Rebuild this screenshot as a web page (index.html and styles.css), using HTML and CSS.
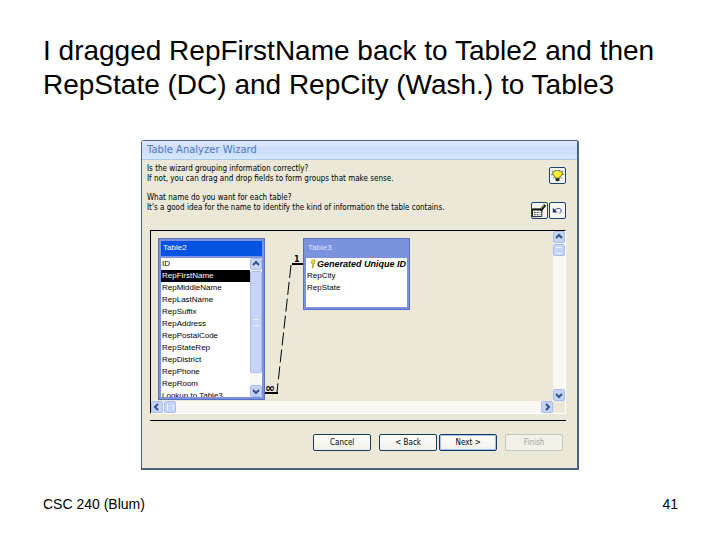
FILE: index.html
```html
<!DOCTYPE html>
<html lang="en">
<head>
    <meta charset="UTF-8">
    <meta name="viewport" content="width=device-width, initial-scale=1.0">
    <title>CSC 240 - Table Analyzer Wizard</title>
    <link rel="stylesheet" href="styles.css">
</head>
<body>
    <main class="slide">
        <h1>I dragged RepFirstName back to Table2 and then RepState (DC) and RepCity (Wash.) to Table3</h1>

        <section class="wizard">
            <h2 class="wizard-title">Table Analyzer Wizard</h2>
            <div class="wizard-body">
                <div class="intro">
                    <div class="questions">
                        <p>Is the wizard grouping information correctly?<br>If not, you can drag and drop fields to form groups that make sense.</p>
                        <p>What name do you want for each table?<br>It's a good idea for the name to identify the kind of information the table contains.</p>
                    </div>
                    <div class="tools">
                        <button class="tool" aria-label="Tips">
                            <svg viewBox="0 0 16 16"><path d="M2 3l2 1M1 7h2M14 3l-2 1M15 7h-2M3 11l2-1M13 11l-2-1" stroke="#777733"/><path d="M5 3h6l2 2v2l-3 3v1H6v-1L3 7V5z" fill="#f8ef20" stroke="#55551a"/><path d="M6 11h4v3H6z" fill="#222"/><path d="M6 4h3" stroke="#fff"/></svg>
                        </button>
                        <div class="tool-row">
                            <button class="tool" aria-label="Rename table">
                                <svg viewBox="0 0 16 16"><path d="M.5 6.500h10v8H.5z" fill="#fff" stroke="#111"/><path d="M0 7h10" stroke="#111" stroke-width="2"/><path d="M2 10h7M2 12.500h7" stroke="#222" stroke-dasharray="2 1"/><path d="M9 8l5-6" stroke="#111" stroke-width="3"/><path d="M10 6l3-4" stroke="#ddd35a"/></svg>
                            </button>
                            <button class="tool" aria-label="Undo">
                                <svg viewBox="0 0 16 16"><path d="M5 8c2-3 7-3 7 0 0 1-1 2-2 3" fill="none" stroke="#1b2a78"/><path d="M3 5v5h5z" fill="#1b2a78"/></svg>
                            </button>
                        </div>
                    </div>
                </div>

                <div class="diagram">
                    <div class="canvas">
                        <svg class="link" viewBox="0 0 44 142">
                            <path d="M29 9h11M2 138h13" stroke="#000" stroke-width="2"/>
                            <path d="M28 10L14 137" stroke="#000" stroke-dasharray="13 4"/>
                            <text x="31" y="7">1</text>
                            <text x="2" y="137">∞</text>
                        </svg>
                        <div class="node node-table2">
                            <h3>Table2</h3>
                            <div class="node-list">
                                <ul>
                                    <li>ID</li>
                                    <li class="selected">RepFirstName</li>
                                    <li>RepMiddleName</li>
                                    <li>RepLastName</li>
                                    <li>RepSuffix</li>
                                    <li>RepAddress</li>
                                    <li>RepPostalCode</li>
                                    <li>RepStateRep</li>
                                    <li>RepDistrict</li>
                                    <li>RepPhone</li>
                                    <li>RepRoom</li>
                                    <li>Lookup to Table3</li>
                                </ul>
                                <div class="scroll scroll-y">
                                    <button aria-label="Scroll up"><svg viewBox="0 0 10 10"><path d="M2 6l3-3 3 3"/></svg></button>
                                    <span class="thumb thumb-long"></span>
                                    <button class="end" aria-label="Scroll down"><svg viewBox="0 0 10 10"><path d="M2 4l3 3 3-3"/></svg></button>
                                </div>
                            </div>
                        </div>
                        <div class="node node-table3">
                            <h3>Table3</h3>
                            <div class="node-list">
                                <ul>
                                    <li class="key"><svg viewBox="0 0 8 10"><path d="M3 1h3v3H5l-1 5H3l1-5H2z" fill="#f2e634" stroke="#77701c" stroke-width=".5"/></svg>Generated Unique ID</li>
                                    <li>RepCity</li>
                                    <li>RepState</li>
                                </ul>
                            </div>
                        </div>
                    </div>
                    <div class="scroll scroll-y">
                        <button aria-label="Scroll up"><svg viewBox="0 0 10 10"><path d="M2 6l3-3 3 3"/></svg></button>
                        <span class="thumb"></span>
                        <button class="end" aria-label="Scroll down"><svg viewBox="0 0 10 10"><path d="M2 4l3 3 3-3"/></svg></button>
                    </div>
                    <div class="scroll scroll-x">
                        <button aria-label="Scroll left"><svg viewBox="0 0 10 10"><path d="M6 2L3 5l3 3"/></svg></button>
                        <span class="thumb"></span>
                        <button class="end" aria-label="Scroll right"><svg viewBox="0 0 10 10"><path d="M4 2l3 3-3 3"/></svg></button>
                    </div>
                </div>

                <div class="actions">
                    <button class="btn">Cancel</button>
                    <div class="btn-pair">
                        <button class="btn">&lt; Back</button>
                        <button class="btn btn-default">Next &gt;</button>
                    </div>
                    <button class="btn" disabled>Finish</button>
                </div>
            </div>
        </section>

        <footer>
            <span>CSC 240 (Blum)</span>
            <span>41</span>
        </footer>
    </main>
</body>
</html>
```

FILE: styles.css
```css
* {
    box-sizing: border-box;
}

body {
    margin: 0;
    background-color: #fff;
    color: #000;
    font-family: "Liberation Sans", Arial, sans-serif;
}

h1, h2, h3, p, ul {
    margin: 0;
    padding: 0;
    font-weight: normal;
}

.slide {
    min-height: 100vh;
    padding: 34px 42px 28px 43px;
    display: flex;
    flex-direction: column;
}

h1 {
    font-size: 28px;
    line-height: 34px;
}

.wizard {
    width: 69%;
    margin: 38px 0 0 98px;
    border: 1px solid #48617f;
    border-right-width: 2px;
    border-bottom-width: 2px;
    border-radius: 3px 3px 0 0;
    background-color: #ebe8d7;
    font-family: "DejaVu Sans Condensed", Tahoma, sans-serif;
    font-size: 8px;
}

.wizard-title {
    padding-left: 5px;
    border-bottom: 1px solid #a9c8e8;
    background: linear-gradient(#dfe9fb, #cadcfa 50%, #d8e8fd);
    color: #527cb8;
    font-family: "DejaVu Sans", Verdana, sans-serif;
    font-size: 10px;
    line-height: 18px;
}

.wizard-body {
    padding: 4px 11px 17px 8px;
}

.intro {
    display: flex;
    justify-content: space-between;
    margin-left: -3px;
    height: 66px;
}

.questions {
    line-height: 10px;
}

.questions p {
    margin-bottom: 9px;
}

.tools {
    display: flex;
    flex-direction: column;
    align-items: flex-end;
    justify-content: space-between;
    padding: 3px 0 11px;
}

.tool-row {
    display: flex;
    gap: 1px;
}

.tool {
    width: 17px;
    height: 17px;
    padding: 0;
    border: 1px solid #1d4270;
    border-radius: 2px;
    background-color: #f6f6f1;
}

.tool svg {
    display: block;
    width: 15px;
    height: 15px;
}

/* table diagram with its two scrollbars */
.diagram {
    display: grid;
    grid-template-columns: 1fr 12px;
    grid-template-rows: 170px 12px;
    border: 1px solid #fff;
    border-top: 1px solid #000;
    border-left: 1px solid #000;
}

.canvas {
    position: relative;
    overflow: hidden;
}

.node {
    position: absolute;
    top: 7px;
    width: 107px;
    padding: 2px;
    display: flex;
    flex-direction: column;
    background-color: #7b93df;
    border: 1px solid #5c6cc0;
}

.node-table2 {
    left: 7px;
    height: 162px;
}

.node-table3 {
    left: 152px;
    height: 72px;
}

.node h3 {
    height: 15px;
    margin-bottom: 2px;
    padding-left: 2px;
    color: #dce6ff;
    font-family: "Liberation Sans", Arial, sans-serif;
    font-size: 8px;
    line-height: 13px;
}

.node-table2 h3 {
    background-color: #0553e2;
    color: #fff;
}

.node-list {
    flex: 1;
    min-height: 0;
    display: flex;
    background-color: #fff;
    overflow: hidden;
}

.node ul {
    flex: 1;
    list-style: none;
    font-family: "Liberation Sans", Arial, sans-serif;
    font-size: 8px;
    line-height: 12px;
    white-space: nowrap;
}

.node li {
    padding-left: 1px;
}

.node li.selected {
    background-color: #000;
    color: #fff;
}

.node li.key {
    display: flex;
    align-items: center;
    padding-left: 3px;
    font-size: 9px;
    font-weight: bold;
    font-style: italic;
}

.key svg {
    width: 8px;
    height: 10px;
}

.link {
    position: absolute;
    left: 112px;
    top: 24px;
    width: 44px;
    height: 142px;
    fill: none;
}

.link text {
    fill: #000;
    font-family: "DejaVu Sans", sans-serif;
    font-size: 8px;
    font-weight: bold;
}

.link text:last-child {
    font-size: 12px;
}

.scroll {
    display: flex;
    gap: 1px;
    background-color: #f8f7f3;
}

.scroll-y {
    flex-direction: column;
    width: 12px;
}

.scroll-x {
    grid-column: 1;
}

.scroll button,
.thumb {
    flex: none;
    width: 12px;
    height: 12px;
    padding: 0;
    border: 1px solid #a9bbef;
    border-radius: 2px;
    background-color: #c6d4fb;
}

.scroll svg {
    display: block;
    width: 10px;
    height: 10px;
    fill: none;
    stroke: #35508c;
    stroke-width: 2;
}

.scroll .end {
    margin-top: auto;
}

.scroll-x .end {
    margin: 0 0 0 auto;
}

/* grip lines in the middle of the thumb */
.thumb {
    display: flex;
    align-items: center;
    justify-content: center;
}

.thumb::before {
    content: "";
    width: 6px;
    height: 5px;
    border: solid #eef4fe;
    border-width: 1px 0;
}

.scroll-x .thumb::before {
    width: 5px;
    height: 6px;
    border-width: 0 1px;
}

.thumb-long {
    height: 102px;
}

.actions {
    display: flex;
    justify-content: flex-end;
    gap: 8px;
    margin-top: 6px;
    padding: 13px 3px 0 0;
    border-top: 1px solid #000;
}

.btn-pair {
    display: flex;
    gap: 2px;
}

.btn {
    width: 58px;
    height: 17px;
    padding: 0;
    border: 1px solid #173a63;
    border-radius: 2px;
    background: linear-gradient(#fff, #f0efe8);
    color: #000;
    font-family: inherit;
    font-size: 8px;
    line-height: 14px;
}

.btn-default {
    box-shadow: inset 0 0 0 1px #a5c3f0;
}

.btn:disabled {
    border-color: #c9c7ba;
    background: #f3f1e7;
    color: #a5a398;
}

footer {
    display: flex;
    justify-content: space-between;
    margin-top: auto;
    font-size: 14px;
    line-height: 15px;
}
```
